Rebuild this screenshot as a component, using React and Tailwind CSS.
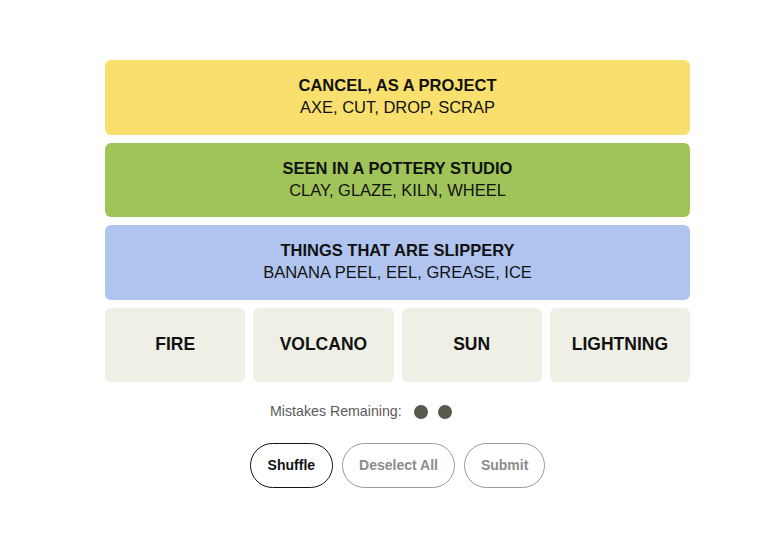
import React from 'react';

const SOLVED = [
    { title: 'CANCEL, AS A PROJECT', words: 'AXE, CUT, DROP, SCRAP', bg: 'bg-[#f9df6d]' },
    { title: 'SEEN IN A POTTERY STUDIO', words: 'CLAY, GLAZE, KILN, WHEEL', bg: 'bg-[#a0c35a]' },
    { title: 'THINGS THAT ARE SLIPPERY', words: 'BANANA PEEL, EEL, GREASE, ICE', bg: 'bg-[#b0c4ef]' },
];

const TILES = ['FIRE', 'VOLCANO', 'SUN', 'LIGHTNING'];

const App = () => {
    return (
        <div className="min-h-[550px] w-[766px] bg-white text-[#121212] font-['Liberation_Sans',Arial,sans-serif]">
            <div className="ml-[105px] w-[585px] pt-[60px]">
                {/* Board */}
                <div className="flex flex-col gap-[8px]">
                    {SOLVED.map((row) => (
                        <div
                            key={row.title}
                            className={`${row.bg} h-[74.5px] rounded-md flex flex-col items-center justify-center pb-[2px]`}
                        >
                            <p className="text-[16.5px] font-bold leading-[22px]">{row.title}</p>
                            <p className="text-[16.5px] leading-[22px]">{row.words}</p>
                        </div>
                    ))}
                    <div className="grid grid-cols-4 gap-[8px]">
                        {TILES.map((t) => (
                            <div
                                key={t}
                                className="h-[74.5px] rounded-md bg-[#efefe6] flex items-center justify-center pb-[2px] text-[17.5px] font-bold"
                            >
                                {t}
                            </div>
                        ))}
                    </div>
                </div>

                {/* Mistakes */}
                <div className="mt-[21px] pl-[165px] flex items-center h-[18px] text-[14.2px] text-[#5a5a5a]">
                    <span>Mistakes Remaining:</span>
                    <div className="flex gap-[10px] ml-[12px]">
                        <span className="w-[14px] h-[14px] rounded-full bg-[#5a594e]" />
                        <span className="w-[14px] h-[14px] rounded-full bg-[#5a594e]" />
                    </div>
                </div>

                {/* Controls */}
                <div className="mt-[22px] flex justify-center gap-[9px]">
                    <button className="h-[45px] px-[17px] rounded-full border border-[#121212] text-[14px] font-bold text-[#121212]">
                        Shuffle
                    </button>
                    <button className="h-[45px] px-[16px] rounded-full border border-[#9a9a9a] text-[14px] font-bold text-[#8c8c8c]">
                        Deselect All
                    </button>
                    <button className="h-[45px] px-[16px] rounded-full border border-[#9a9a9a] text-[14px] font-bold text-[#8c8c8c]">
                        Submit
                    </button>
                </div>
            </div>
        </div>
    );
};

export default App;
